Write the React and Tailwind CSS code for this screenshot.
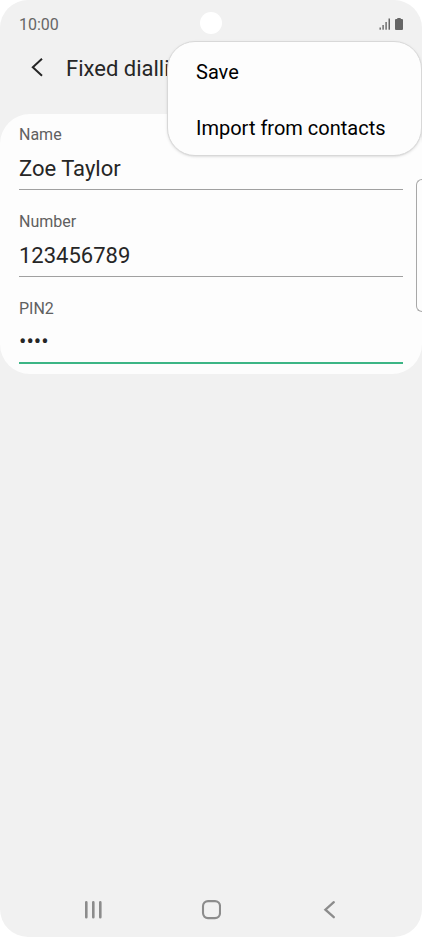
import { useState } from "react";

const menuItems = ["Save", "Import from contacts"];

function StatusBar() {
  return (
    <div className="relative flex h-12 items-center justify-between px-[19px] pt-0.5 text-[#666666]">
      <span className="text-base">10:00</span>

      {/* Camera cutout */}
      <div className="absolute top-3 left-1/2 size-[22px] -translate-x-1/2 rounded-full bg-white" />

      <div className="flex items-center gap-1 pb-0.5">
        <svg width="12" height="12" viewBox="0 0 12 12" fill="currentColor">
          <rect x="0.5" y="9.5" width="1.4" height="2.2" />
          <rect x="3.4" y="7" width="1.4" height="4.7" />
          <rect x="6.4" y="4" width="1.4" height="7.7" />
          <rect x="9.5" y="0.5" width="1.5" height="11.2" />
        </svg>
        <svg width="8" height="12" viewBox="0 0 8 12" fill="currentColor">
          <path d="M2.3 0h3.4v1H7a1 1 0 0 1 1 1v9a1 1 0 0 1-1 1H1a1 1 0 0 1-1-1V2a1 1 0 0 1 1-1h1.3z" />
        </svg>
      </div>
    </div>
  );
}

function Header() {
  return (
    <header className="flex h-10 items-center pr-5 pl-6 text-[#262626]">
      <button aria-label="Back" className="flex size-[26px] items-center justify-center">
        <svg width="12" height="20" viewBox="0 0 12 20" fill="none" stroke="currentColor" strokeWidth="2">
          <path d="M11 0.8 1.8 9.2 11 17.8" />
        </svg>
      </button>
      <h1 className="ml-4 text-[22px] whitespace-nowrap">Fixed dialling</h1>
    </header>
  );
}

function Field({ id, label, active, ...props }) {
  return (
    <div className="flex flex-col">
      <label htmlFor={id} className="text-base text-[#606060]">
        {label}
      </label>
      <input
        id={id}
        className={`h-[43px] w-full bg-transparent text-[22px] text-[#262626] outline-none ${
          active ? "border-b-2 border-[#3cb585]" : "border-b border-[#a0a0a0]"
        }`}
        {...props}
      />
    </div>
  );
}

function OptionsMenu() {
  return (
    <ul className="absolute top-[41px] right-0 w-[255px] rounded-[28px] border border-[#d8d8d8] bg-[#fdfdfd] pt-px shadow-sm">
      {menuItems.map((item) => (
        <li key={item}>
          <button className="block h-[56px] w-full px-7 pt-0.5 text-left text-xl text-black">
            {item}
          </button>
        </li>
      ))}
    </ul>
  );
}

function NavBar() {
  return (
    <nav className="mt-auto flex h-14 items-center justify-center gap-[94px] pt-0.5 text-[#8c8c8c]">
      <button aria-label="Recent apps" className="flex w-6 justify-center">
        <svg width="20" height="20" viewBox="0 0 20 20" fill="none" stroke="currentColor" strokeWidth="2.6" strokeLinecap="round">
          <path d="M3.3 2.4v14.8M10.3 2.4v14.8M17.3 2.4v14.8" />
        </svg>
      </button>
      <button aria-label="Home" className="flex w-6 justify-center">
        <svg width="20" height="20" viewBox="0 0 20 20" fill="none" stroke="currentColor" strokeWidth="2.1">
          <rect x="2" y="1.1" width="17" height="17" rx="5" />
        </svg>
      </button>
      <button aria-label="Back" className="flex w-6 justify-center">
        <svg width="20" height="20" viewBox="0 0 20 20" fill="none" stroke="currentColor" strokeWidth="2.3" strokeLinecap="round">
          <path d="M14.8 2.2 6.4 9.7l8.4 7.5" />
        </svg>
      </button>
    </nav>
  );
}

export default function App() {
  const [name, setName] = useState("Zoe Taylor");
  const [number, setNumber] = useState("123456789");
  const [pin, setPin] = useState("1234");

  return (
    <div className="bg-white font-[Roboto,sans-serif]">
      <div className="relative flex min-h-dvh flex-col overflow-hidden rounded-[28px] bg-[#f1f1f1]">
        <StatusBar />
        <Header />

        <form className="mt-[26px] flex flex-col gap-5 rounded-[30px] bg-[#fdfdfd] px-[19px] pt-[9px] pb-[10px]">
          <Field
            id="name"
            label="Name"
            value={name}
            onChange={(e) => setName(e.target.value)}
          />
          <Field
            id="number"
            label="Number"
            inputMode="tel"
            value={number}
            onChange={(e) => setNumber(e.target.value)}
          />
          <Field
            id="pin2"
            label="PIN2"
            type="password"
            active
            value={pin}
            onChange={(e) => setPin(e.target.value)}
          />
        </form>

        {/* Edge panel handle */}
        <div className="absolute top-[179px] right-0 h-[133px] w-[6px] rounded-l-md border border-r-0 border-[#a8a8a8]" />

        <OptionsMenu />
        <NavBar />
      </div>
    </div>
  );
}
